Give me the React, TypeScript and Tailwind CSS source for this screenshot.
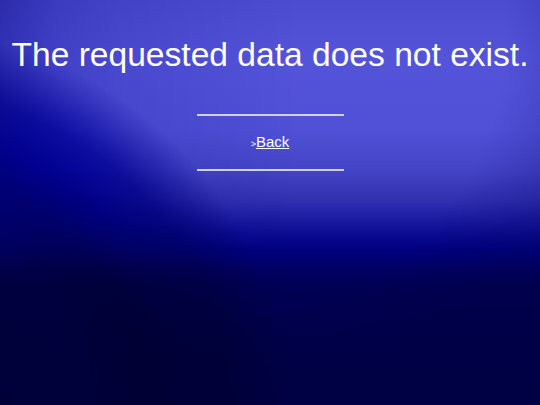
export default function App() {
  return (
    <div className="relative h-[405px] w-[540px] overflow-hidden bg-blend-multiply bg-[image:radial-gradient(circle_380px_at_-100px_420px,#0000f8_0px,#0000ea_180px,#0000c8_250px,#0000d4_285px,#3a3ad4_330px,#a0a0e8_360px,#ffffff_390px),linear-gradient(to_right,#b0b0e2_0px,#dedef2_120px,#ffffff_300px),radial-gradient(ellipse_300px_330px_at_280px_40px,#ffffff_0%,#ffffff_75%,#c8c8e8_100%),linear-gradient(to_bottom,#4c4cd0_0px,#5454da_60px,#5050d6_130px,#4444c6_170px,#3030b0_200px,#1a1aa0_220px,#0a0a90_235px,#000080_250px,#000062_270px,#000054_290px,#00004e_330px,#00004c_405px)] font-['Liberation_Sans',Arial,sans-serif]">
      <div className="flex flex-col items-center pt-[35px]">
        <h1 className="text-[33.6px] leading-[40px] text-white whitespace-nowrap">
          The requested data does not exist.
        </h1>
        <div className="mt-[39px] h-[2px] w-[147px] bg-[#d0d0f2]" />
        <div className="mt-[17px] flex items-baseline text-white">
          <span className="text-[9px]">&gt;</span>
          <a href="#" className="text-[15px] leading-[18px] underline">
            Back
          </a>
        </div>
        <div className="mt-[17px] h-[2px] w-[147px] bg-[#d0d0f2]" />
      </div>
    </div>
  );
}
